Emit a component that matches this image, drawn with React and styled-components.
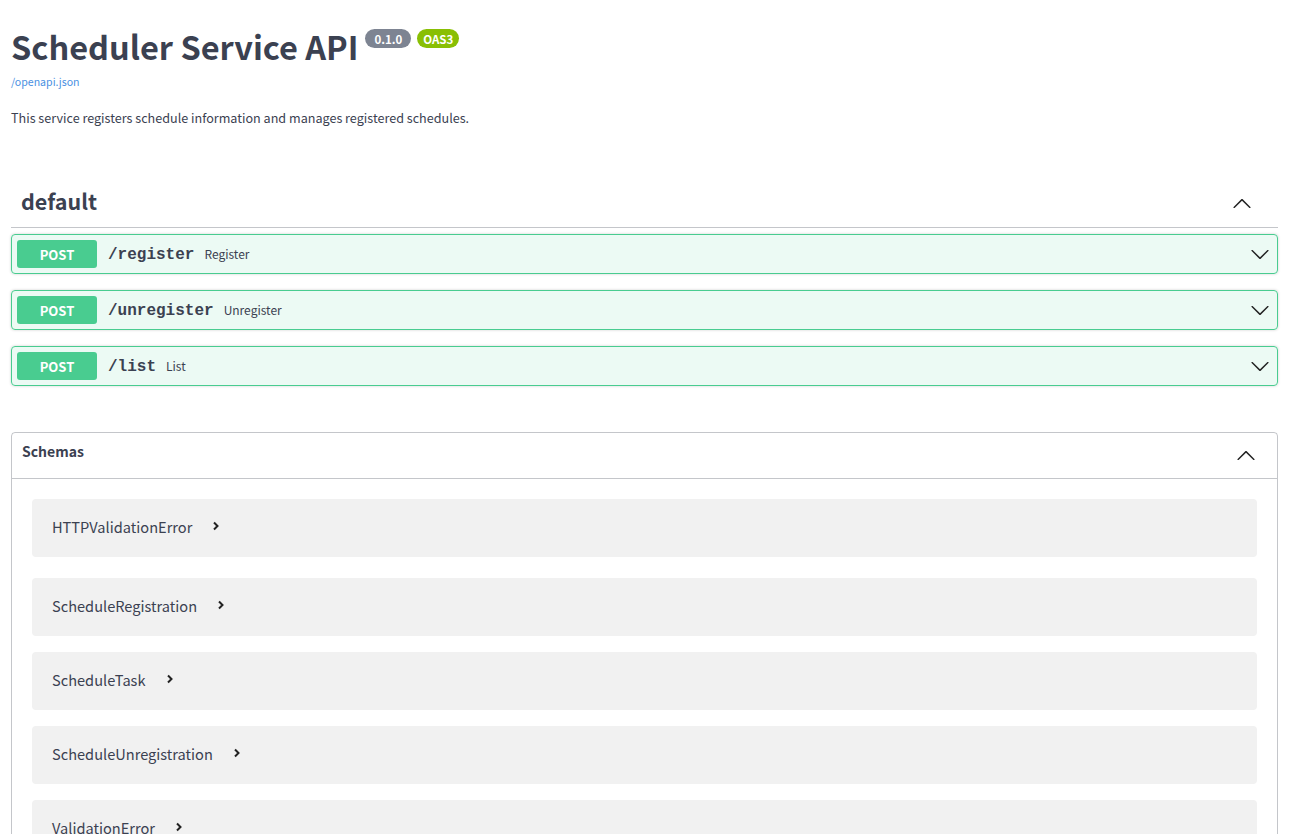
import React from "react";
import styled, { createGlobalStyle } from "styled-components";

const Global = createGlobalStyle`
  html, body { margin: 0; padding: 0; background: #fff; }
  body { font-family: "Noto Sans CJK KR", "Noto Sans", sans-serif; color: #3b4151; }
`;

const Page = styled.div`
  padding: 0 11px;
`;

const Info = styled.div`
  padding-top: 24px;
`;

const TitleRow = styled.div`
  display: flex;
  align-items: flex-start;
  gap: 7px;
`;

const Title = styled.h2`
  margin: 0;
  font-size: 32.5px;
  line-height: 44px;
  font-weight: 700;
  color: #3b4151;
`;

const Badges = styled.div`
  display: flex;
  gap: 6px;
  padding-top: 5px;
`;

const Badge = styled.span`
  display: inline-flex;
  align-items: center;
  justify-content: center;
  height: 19px;
  padding: 0 ${(p) => p.$pad}px;
  border-radius: 57px;
  background: ${(p) => p.$bg};
  color: #fff;
  font-size: 11.5px;
  font-weight: 700;
`;

const Link = styled.a`
  display: block;
  margin-top: 6px;
  font-size: 10.6px;
  line-height: 16px;
  color: #4990e2;
  text-decoration: none;
`;

const Description = styled.p`
  margin: 18px 0 0;
  font-size: 12.6px;
  line-height: 20px;
  color: #3b4151;
`;

const Tag = styled.section`
  margin-top: 53px;
`;

const TagHeader = styled.div`
  display: flex;
  align-items: center;
  justify-content: space-between;
  height: 46px;
  padding: 0 26px 0 10px;
  border-bottom: 1px solid rgba(59, 65, 81, 0.3);
  margin-bottom: 6px;
`;

const TagTitle = styled.h3`
  margin: 0 0 6px;
  font-size: 21.5px;
  line-height: 30px;
  font-weight: 700;
  color: #3b4151;
`;

const Op = styled.div`
  display: flex;
  align-items: center;
  height: 40px;
  box-sizing: border-box;
  padding: 0 7px 0 5px;
  border: 1px solid #49cc90;
  border-radius: 4px;
  background: rgba(73, 204, 144, 0.1);
  box-shadow: 0 0 3px rgba(0, 0, 0, 0.19);
  margin-bottom: 16px;
`;

const Method = styled.span`
  display: inline-flex;
  align-items: center;
  justify-content: center;
  width: 80px;
  height: 28px;
  border-radius: 3px;
  background: #49cc90;
  color: #fff;
  font-size: 13px;
  font-weight: 700;
`;

const Path = styled.span`
  padding: 2px 10px 0 11px;
  font-family: "Liberation Mono", "DejaVu Sans Mono", monospace;
  font-size: 16px;
  line-height: 20px;
  font-weight: 700;
  color: #3b4151;
`;

const Summary = styled.span`
  flex: 1;
  font-size: 12px;
  line-height: 20px;
  color: #3b4151;
`;

const Models = styled.section`
  margin-top: 46px;
  border: 1px solid rgba(59, 65, 81, 0.3);
  border-radius: 4px;
`;

const ModelsHeader = styled.div`
  display: flex;
  align-items: center;
  justify-content: space-between;
  height: 45px;
  padding: 0 21px 0 10px;
  border-bottom: 1px solid rgba(59, 65, 81, 0.3);
`;

const ModelsTitle = styled.h4`
  margin: 0 0 9px;
  font-size: 14px;
  font-weight: 700;
  color: #3b4151;
`;

const ModelList = styled.div`
  padding: 20px 20px 0;
`;

const Model = styled.div`
  display: flex;
  align-items: center;
  gap: 20px;
  height: 58px;
  box-sizing: border-box;
  padding: 0 20px 4px;
  border-radius: 4px;
  background: #f1f1f1;
  margin-bottom: ${(p) => p.$gap}px;
  font-size: 14.6px;
  color: #3b4151;
`;

const Chevron = ({ dir = "down", size = 20 }) => {
  const rot = { down: 0, up: 180, right: -90 }[dir];
  return (
    <svg width={size} height={size} viewBox="0 0 20 20" style={{ transform: `rotate(${rot}deg)` }}>
      <path
        fill="#222"
        d="M17.418 6.109c.272-.268.709-.268.979 0s.271.701 0 .969l-7.908 7.83c-.27.268-.707.268-.979 0l-7.908-7.83c-.27-.268-.27-.701 0-.969.271-.268.709-.268.979 0L10 13.25l7.418-7.141z"
      />
    </svg>
  );
};

const SmallArrow = () => (
  <svg width="8" height="10" viewBox="0 0 8 10">
    <path d="M2 1.5 L5.5 5 L2 8.5" fill="none" stroke="#222" strokeWidth="2" />
  </svg>
);

const ops = [
  { path: "/register", summary: "Register" },
  { path: "/unregister", summary: "Unregister" },
  { path: "/list", summary: "List" },
];

const schemas = [
  ["HTTPValidationError", 21],
  ["ScheduleRegistration", 16],
  ["ScheduleTask", 16],
  ["ScheduleUnregistration", 16],
  ["ValidationError", 16],
];

export default function App() {
  return (
    <Page>
      <Global />
      <Info>
        <TitleRow>
          <Title>Scheduler Service API</Title>
          <Badges>
            <Badge $bg="#7d8492" $pad={9}>0.1.0</Badge>
            <Badge $bg="#89bf04" $pad={6}>OAS3</Badge>
          </Badges>
        </TitleRow>
        <Link href="#">/openapi.json</Link>
        <Description>This service registers schedule information and manages registered schedules.</Description>
      </Info>
      <Tag>
        <TagHeader>
          <TagTitle>default</TagTitle>
          <Chevron dir="up" />
        </TagHeader>
        {ops.map((o) => (
          <Op key={o.path}>
            <Method>POST</Method>
            <Path>{o.path}</Path>
            <Summary>{o.summary}</Summary>
            <Chevron dir="down" />
          </Op>
        ))}
      </Tag>
      <Models>
        <ModelsHeader>
          <ModelsTitle>Schemas</ModelsTitle>
          <Chevron dir="up" />
        </ModelsHeader>
        <ModelList>
          {schemas.map(([name, gap]) => (
            <Model key={name} $gap={gap}>
              {name}
              <SmallArrow />
            </Model>
          ))}
        </ModelList>
      </Models>
    </Page>
  );
}
